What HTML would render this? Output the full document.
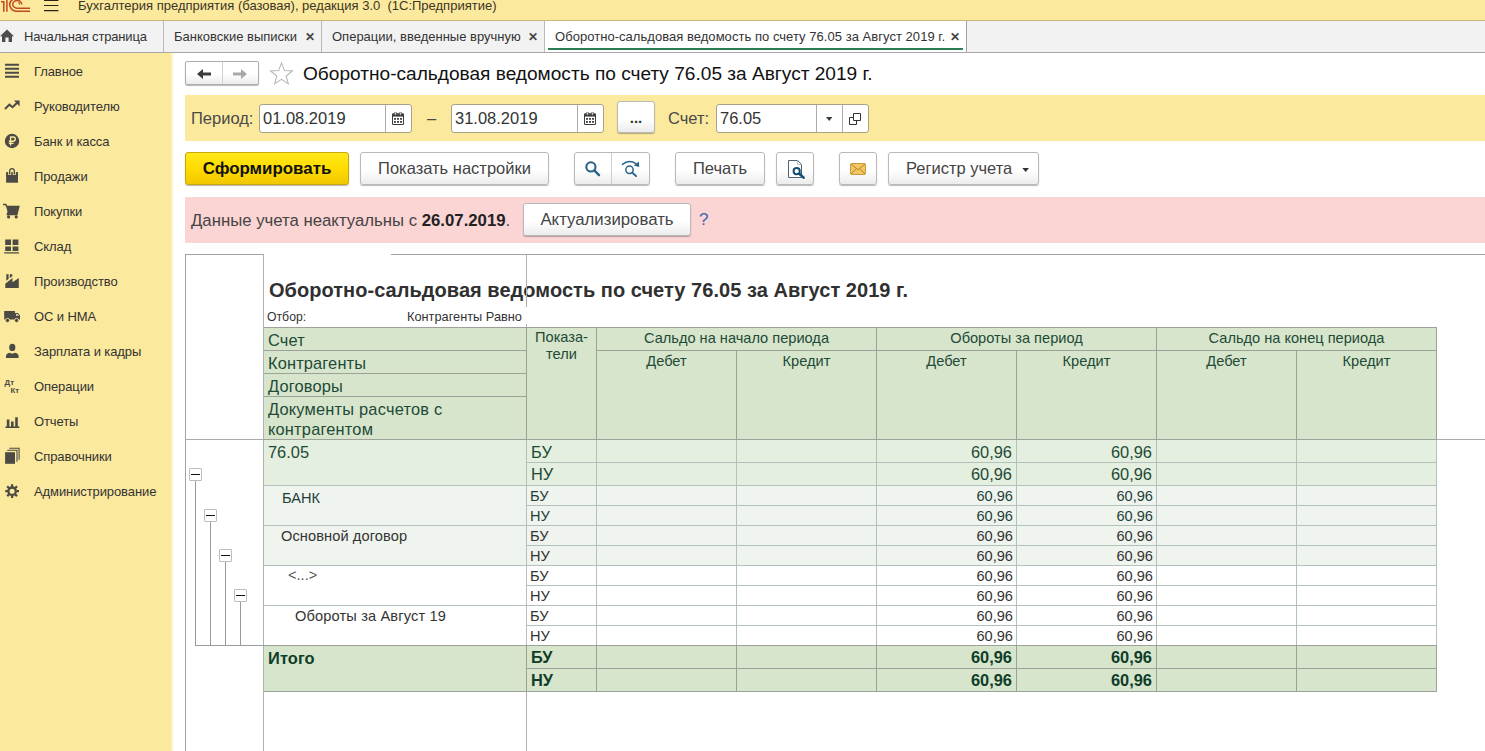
<!DOCTYPE html>
<html lang="ru"><head><meta charset="utf-8"><title>Оборотно-сальдовая ведомость по счету 76.05</title>
<style>
*{box-sizing:border-box;margin:0;padding:0}
html,body{width:1485px;height:751px;overflow:hidden;background:#fff}
body{font-family:"Liberation Sans",sans-serif;color:#333;position:relative;font-size:13px}
.a{position:absolute;white-space:nowrap}
#top{left:0;top:0;width:1485px;height:21px;background:#fbe99e;border-bottom:1px solid #c9b973}
#tabs{left:0;top:21px;width:1485px;height:32px;background:#f2f2f2;border-bottom:1px solid #a8a8a8}
#side{left:0;top:53px;width:173px;height:698px;background:#fbe99e;border-right:2px solid #fdf3c4}
.sep{position:absolute;top:21px;width:1px;height:31px;background:#b9b9b9}
.tab{position:absolute;top:21px;height:31px;line-height:31px;font-size:13px;color:#333;white-space:nowrap}
.x{position:absolute;top:22px;height:31px;line-height:31px;font-size:12px;font-weight:bold;color:#444}
.mi{position:absolute;left:34px;font-size:13px;color:#333;height:20px;line-height:20px;white-space:nowrap;letter-spacing:-.1px}
.ic{position:absolute;left:3px;width:18px;height:18px}
.btn{position:absolute;border:1px solid #b9b9b9;border-radius:3px;background:linear-gradient(#ffffff 0%,#ffffff 55%,#ececec 100%);box-shadow:0 1px 1px rgba(0,0,0,.28);text-align:center;color:#444;white-space:nowrap}
.inp{position:absolute;top:104px;height:29px;background:#fff;border:1px solid #a9a287;border-radius:3px;font-size:16.5px;line-height:27px;color:#333;padding-left:3px;white-space:nowrap}
.inp i{position:absolute;top:0;width:1px;height:27px;background:#adaca6}
.lbl{position:absolute;font-size:16.5px;color:#4a4a4a;top:104px;height:29px;line-height:29px;white-space:nowrap}
</style></head><body>

<div id="top" class="a">
<svg class="a" style="left:0;top:0" width="32" height="14" viewBox="0 0 32 14">
 <g fill="none" stroke="#c4481f" stroke-width="1.5">
  <path d="M1 1.8 H4.5 M3.8 1.2 V11.8 M6.9 0 V11.8"/>
  <path d="M13.2 -1 A7.4 6.65 0 0 0 17.2 11.25 H30"/>
  <path d="M21.7 4.5 A4.5 3.85 0 1 0 17.2 8.15 H30"/>
  <path d="M18.2 2.5 Q19.8 2.7 19.7 4.6" stroke-width="1.2"/>
 </g>
</svg>
<svg class="a" style="left:44px;top:0" width="15" height="12" viewBox="0 0 15 12"><path d="M0 0.3H14.4M0 5.5H14.4M0 10.6H14.4" stroke="#2a2412" stroke-width="1.2"/></svg>
<div class="a" style="left:78px;top:-4px;height:20px;line-height:20px;font-size:13px;color:#3a3524;white-space:pre">Бухгалтерия предприятия (базовая), редакция 3.0  (1С:Предприятие)</div>
</div>
<div id="tabs" class="a"></div>
<svg class="a" style="left:0;top:29px" width="15" height="14" viewBox="0 0 15 14"><path d="M0 7.2 L7 0.6 L14 7.2 H12 V12.9 H8.6 V8.6 H5.4 V12.9 H2 V7.2 Z" fill="#4d4d4d"/></svg>
<div class="tab" style="left:24px;letter-spacing:-.17px">Начальная страница</div>
<div class="sep" style="left:163px"></div>
<div class="tab" style="left:174px">Банковские выписки</div>
<div class="x" style="left:305px">✕</div>
<div class="sep" style="left:321px"></div>
<div class="tab" style="left:332px">Операции, введенные вручную</div>
<div class="x" style="left:528px">✕</div>
<div class="sep" style="left:544px"></div>
<div class="a" style="left:545px;top:21px;width:421px;height:31px;background:#fff"></div>
<div class="a" style="left:548px;top:48px;width:415px;height:2px;background:#2b7d54"></div>
<div class="tab" style="left:555px;color:#333;letter-spacing:.04px">Оборотно-сальдовая ведомость по счету 76.05 за Август 2019 г.</div>
<div class="x" style="left:950px">✕</div>
<div class="sep" style="left:966px;height:31px;background:#a2a2a2"></div>
<div id="side" class="a"></div>
<svg class="ic" style="top:62px" viewBox="0 0 18 18"><path d="M0 1.2H14M0 5.2H14M0 9.2H14M0 13.2H14" stroke="#4b4a44" stroke-width="2.1" transform="translate(2,1.6)"/></svg><div class="mi" style="top:62px">Главное</div>
<svg class="ic" style="top:97px" viewBox="0 0 18 18"><path d="M2 12 L6.4 7.6 L9.6 10.2 L14.6 5.2" stroke="#4b4a44" stroke-width="2" fill="none"/><path d="M11 3.6 H16.6 V9.2 Z" fill="#4b4a44"/></svg><div class="mi" style="top:97px">Руководителю</div>
<svg class="ic" style="top:132px" viewBox="0 0 18 18"><circle cx="9" cy="9" r="7.2" fill="#4b4a44"/><path d="M7.6 13.4 V5 H10.2 A2.1 2.1 0 0 1 10.2 9.2 H5.8 M5.8 11.4 H10.6" stroke="#fbe99e" stroke-width="1.4" fill="none"/></svg><div class="mi" style="top:132px">Банк и касса</div>
<svg class="ic" style="top:167px" viewBox="0 0 18 18"><path d="M3.1 5.1 H15 V15.7 H3.1 Z" fill="#4b4a44"/><path d="M6.7 8 V3.9 A2.3 2.3 0 0 1 11.3 3.9 V8" stroke="#fbe99e" stroke-width="3" fill="none"/><path d="M6.7 7.6 V3.9 A2.3 2.3 0 0 1 11.3 3.9 V7.6" stroke="#4b4a44" stroke-width="1.3" fill="none"/></svg><div class="mi" style="top:167px">Продажи</div>
<svg class="ic" style="top:202px" viewBox="0 0 18 18"><g transform="translate(-0.8,0.3)"><path d="M0.6 2.2 H3.6 L4.6 4.2 H16.6 L15 10.6 H5.6 L5.2 12.2 H15.4" stroke="#4b4a44" stroke-width="1.5" fill="none"/><path d="M4 4.2 H16.6 L15 10.6 H5.6 Z" fill="#4b4a44"/><circle cx="6.4" cy="14.6" r="1.6" fill="#4b4a44"/><circle cx="14" cy="14.6" r="1.6" fill="#4b4a44"/></g></svg><div class="mi" style="top:202px">Покупки</div>
<svg class="ic" style="top:237px" viewBox="0 0 18 18"><path d="M2.2 2.4 H8 V8 H2.2 Z M9.6 2.4 H15.4 V8 H9.6 Z M2.2 9.4 H8 V14 H2.2 Z M9.6 9.4 H15.4 V14 H9.6 Z M1.2 15.2 H16 V16.6 H1.2 Z" fill="#4b4a44"/></svg><div class="mi" style="top:237px">Склад</div>
<svg class="ic" style="top:272px" viewBox="0 0 18 18"><path d="M2.3 15.9 V11.7 L9.5 6.1 V10.3 L15.8 6.1 V15.9 Z M3.3 2.3 H5.6 V7 L3.3 8.8 Z M6.8 2.3 H9.3 V4.2 L6.8 6.1 Z" fill="#4b4a44"/></svg><div class="mi" style="top:272px">Производство</div>
<svg class="ic" style="top:307px" viewBox="0 0 18 18"><path d="M1.2 4.1 H11.9 V12.6 H1.2 Z M11.9 6 H15 L17 8.6 V12.6 H11.9 Z" fill="#4b4a44"/><path d="M13 7 H14.8 L16 8.8 H13 Z" fill="#e9dfae"/><circle cx="4.5" cy="13.4" r="2.1" fill="#4b4a44" stroke="#fbe99e" stroke-width=".8"/><circle cx="13.6" cy="13.4" r="2.1" fill="#4b4a44" stroke="#fbe99e" stroke-width=".8"/></svg><div class="mi" style="top:307px">ОС и НМА</div>
<svg class="ic" style="top:342px" viewBox="0 0 18 18"><ellipse cx="9.3" cy="5.4" rx="3.1" ry="3.6" fill="#4b4a44"/><path d="M3 16 V14.2 Q3 11.6 6.6 10.8 L9.3 11.8 L12 10.8 Q15.6 11.6 15.6 14.2 V16 Z" fill="#4b4a44"/></svg><div class="mi" style="top:342px">Зарплата и кадры</div>
<svg class="ic" style="top:377px" viewBox="0 0 18 18"><text x="1.6" y="7.6" font-family="Liberation Sans, sans-serif" font-size="7.8" font-weight="bold" fill="#4b4a44">Дт</text><text x="7.6" y="15.6" font-family="Liberation Sans, sans-serif" font-size="7.8" font-weight="bold" fill="#4b4a44">Кт</text></svg><div class="mi" style="top:377px">Операции</div>
<svg class="ic" style="top:412px" viewBox="0 0 18 18"><path d="M2.4 14.6 H16.4 V16 H2.4 Z M3.8 7.4 H6.4 V14.8 H3.8 Z M8 9.4 H10.6 V14.8 H8 Z M12.2 5.2 H14.8 V14.8 H12.2 Z" fill="#4b4a44"/></svg><div class="mi" style="top:412px">Отчеты</div>
<svg class="ic" style="top:447px" viewBox="0 0 18 18"><path d="M2.1 5.2 H12 V16.8 H2.1 Z" fill="#4b4a44"/><path d="M4.2 3.2 H14 V14.8 M6.4 1.3 H16.1 V12.8" stroke="#4b4a44" stroke-width="1.1" fill="none"/></svg><div class="mi" style="top:447px">Справочники</div>
<svg class="ic" style="top:482px" viewBox="0 0 18 18"><circle cx="9.1" cy="9.2" r="3.7" fill="none" stroke="#4b4a44" stroke-width="2.3"/><path d="M9.1 2.3V5M9.1 13.4V16.1M2.2 9.2H4.9M13.3 9.2H16M4.2 4.3L6.1 6.2M12.1 12.2L14 14.1M4.2 14.1L6.1 12.2M12.1 6.2L14 4.3" stroke="#4b4a44" stroke-width="2.3"/></svg><div class="mi" style="top:482px">Администрирование</div>

<!-- nav -->
<div class="btn" style="left:185px;top:61px;width:74px;height:24px;border-radius:2px;border-color:#adadad"></div>
<div class="a" style="left:222px;top:62px;width:1px;height:22px;background:#d2d2d2"></div>
<svg class="a" style="left:196px;top:67.6px" width="16" height="12" viewBox="0 0 16 12"><path d="M1 6 L7 1 V4.6 H15 V7.4 H7 V11 Z" fill="#3c3c3c"/></svg>
<svg class="a" style="left:232px;top:67.6px" width="16" height="12" viewBox="0 0 16 12"><path d="M15 6 L9 1 V4.6 H1 V7.4 H9 V11 Z" fill="#a9a9a9"/></svg>
<svg class="a" style="left:267.6px;top:60.6px" width="27" height="25" viewBox="0 0 26 24"><path d="M13 1.8 L15.8 9.2 L23.6 9.5 L17.5 14.4 L19.6 22 L13 17.7 L6.4 22 L8.5 14.4 L2.4 9.5 L10.2 9.2 Z" fill="#fff" stroke="#b5b5b5" stroke-width="1"/></svg>
<div class="a" style="left:303px;top:62px;height:24px;line-height:24px;font-size:19.1px;color:#111">Оборотно-сальдовая ведомость по счету 76.05 за Август 2019 г.</div>

<!-- period bar -->
<div class="a" style="left:185px;top:95px;width:1300px;height:46px;background:#fbe99e"></div>
<div class="lbl" style="left:191px">Период:</div>
<div class="inp" style="left:259px;width:153px">01.08.2019<i style="left:125px"></i></div>
<div class="lbl" style="left:427px">–</div>
<div class="inp" style="left:451px;width:153px">31.08.2019<i style="left:125px"></i></div>
<div class="btn" style="left:617px;top:101px;width:38px;height:32px;line-height:31px;font-size:15px;font-weight:bold;color:#333">...</div>
<div class="lbl" style="left:668px">Счет:</div>
<div class="inp" style="left:716px;width:153px">76.05<i style="left:99px"></i><i style="left:125px"></i></div>
<svg class="a" style="left:392px;top:112px" width="12" height="13" viewBox="0 0 12 13"><path d="M1.2 1.2 H10.8 A1.2 1.2 0 0 1 12 2.4 V11.8 A1.2 1.2 0 0 1 10.8 13 H1.2 A1.2 1.2 0 0 1 0 11.8 V2.4 A1.2 1.2 0 0 1 1.2 1.2 Z" fill="#3d3d3d"/><rect x="1" y="4.6" width="10" height="7.4" fill="#fff"/><rect x="2.7" y="0" width="1.7" height="3.2" rx=".85" fill="#fff" stroke="#3d3d3d" stroke-width=".7"/><rect x="7.6" y="0" width="1.7" height="3.2" rx=".85" fill="#fff" stroke="#3d3d3d" stroke-width=".7"/><path d="M2.1 6h1.8v1.8H2.1zM5.1 6h1.8v1.8H5.1zM8.1 6h1.8v1.8H8.1zM2.1 9h1.8v1.8H2.1zM5.1 9h1.8v1.8H5.1zM8.1 9h1.8v1.8H8.1z" fill="#2e2e2e"/></svg>
<svg class="a" style="left:584px;top:112px" width="12" height="13" viewBox="0 0 12 13"><path d="M1.2 1.2 H10.8 A1.2 1.2 0 0 1 12 2.4 V11.8 A1.2 1.2 0 0 1 10.8 13 H1.2 A1.2 1.2 0 0 1 0 11.8 V2.4 A1.2 1.2 0 0 1 1.2 1.2 Z" fill="#3d3d3d"/><rect x="1" y="4.6" width="10" height="7.4" fill="#fff"/><rect x="2.7" y="0" width="1.7" height="3.2" rx=".85" fill="#fff" stroke="#3d3d3d" stroke-width=".7"/><rect x="7.6" y="0" width="1.7" height="3.2" rx=".85" fill="#fff" stroke="#3d3d3d" stroke-width=".7"/><path d="M2.1 6h1.8v1.8H2.1zM5.1 6h1.8v1.8H5.1zM8.1 6h1.8v1.8H8.1zM2.1 9h1.8v1.8H2.1zM5.1 9h1.8v1.8H5.1zM8.1 9h1.8v1.8H8.1z" fill="#2e2e2e"/></svg>
<svg class="a" style="left:826px;top:117px" width="7" height="4" viewBox="0 0 7 4"><path d="M0 0 H6.4 L3.2 4 Z" fill="#3a3a3a"/></svg>
<svg class="a" style="left:848px;top:112px" width="14" height="14" viewBox="0 0 14 14"><path d="M5.5 1.5 H12.5 V8.5 H5.5 Z M5.5 5.5 H1.5 V12.5 H8.5 V8.5" fill="none" stroke="#333" stroke-width="1"/></svg>

<!-- buttons -->
<div class="btn" style="left:185px;top:152px;width:164px;height:33px;line-height:31px;font-size:16.9px;font-weight:bold;color:#111;background:linear-gradient(#ffe81a 0%,#ffdc00 50%,#f2c700 100%);border-color:#c9a70a">Сформировать</div>
<div class="btn" style="left:360px;top:152px;width:189px;height:33px;line-height:31px;font-size:16.5px">Показать настройки</div>
<div class="btn" style="left:574px;top:152px;width:76px;height:33px"></div>
<div class="a" style="left:611px;top:153px;width:1px;height:31px;background:#cfcfcf"></div>
<div class="btn" style="left:675px;top:152px;width:90px;height:33px;line-height:31px;font-size:16.5px">Печать</div>
<div class="btn" style="left:776px;top:152px;width:38px;height:33px"></div>
<div class="btn" style="left:839px;top:152px;width:38px;height:33px"></div>
<div class="btn" style="left:888px;top:152px;width:151px;height:33px;line-height:31px;font-size:16.5px;text-align:left;padding-left:17px">Регистр учета</div>
<svg class="a" style="left:1022px;top:168px" width="8" height="5" viewBox="0 0 8 5"><path d="M0.3 0 H7 L3.65 4 Z" fill="#333"/></svg>
<svg class="a" style="left:583px;top:159px" width="20" height="20" viewBox="0 0 20 20"><circle cx="7.9" cy="7.9" r="4.6" fill="none" stroke="#2a6389" stroke-width="2.1"/><path d="M11.3 11.4 L16 16.2" stroke="#2a6389" stroke-width="2.4" stroke-linecap="round"/></svg>
<svg class="a" style="left:620px;top:158px" width="22" height="22" viewBox="0 0 22 22"><circle cx="9.5" cy="11.8" r="3.7" fill="none" stroke="#2a6389" stroke-width="1.5"/><path d="M12.2 14.6 L16 18" stroke="#2a6389" stroke-width="1.9" stroke-linecap="round"/><path d="M2.4 6.4 Q9 1.2 16 5.6" fill="none" stroke="#2a6389" stroke-width="1.4" stroke-linecap="round"/><path d="M19 3.4 L19.2 9 L13.8 7.4 Z" fill="#2a6389"/></svg>
<svg class="a" style="left:787px;top:159px" width="20" height="21" viewBox="0 0 20 21"><path d="M1.5 1.5 H10.6 L14.5 5.4 V18.5 H1.5 Z" fill="#fff" stroke="#4d637a" stroke-width="1"/><path d="M10.6 1.5 V5.4 H14.5" fill="none" stroke="#9aa8b5" stroke-width=".8"/><circle cx="9.7" cy="12.2" r="3.1" fill="#fff" stroke="#134f6e" stroke-width="2"/><path d="M12.3 14.8 L16.6 18.6" stroke="#134f6e" stroke-width="2.6" stroke-linecap="round"/></svg>
<svg class="a" style="left:850px;top:163px" width="16" height="12" viewBox="0 0 16 12"><rect x=".5" y=".5" width="15" height="11" rx="1" fill="#f3c661" stroke="#c99a3a"/><path d="M1 1 L8 6.8 L15 1 M1 11 L6.2 5.6 M15 11 L9.8 5.6" fill="none" stroke="#b8842a" stroke-width="1"/></svg>

<!-- pink bar -->
<div class="a" style="left:185px;top:197px;width:1300px;height:46px;background:#fbd4d4"></div>
<div class="a" style="left:191px;top:210px;height:22px;line-height:22px;font-size:16.75px;color:#444">Данные учета неактуальны с <b style="color:#222">26.07.2019</b>.</div>
<div class="btn" style="left:523px;top:203px;width:168px;height:33px;line-height:31px;font-size:16.8px">Актуализировать</div>
<div class="a" style="left:699px;top:209px;height:22px;line-height:22px;font-size:17px;color:#3a66b0">?</div>
<!-- sheet -->
<div class="a" style="left:185px;top:254px;width:79px;height:1px;background:#a3a3a3;"></div>
<div class="a" style="left:391px;top:254px;width:1094px;height:1px;background:#a3a3a3;"></div>
<div class="a" style="left:185px;top:254px;width:1px;height:497px;background:#a3a3a3;"></div>
<div class="a" style="left:263px;top:254px;width:1px;height:497px;background:#b0b0b0;"></div>
<div class="a" style="left:185px;top:439px;width:1300px;height:1px;background:#ababab;"></div>
<div class="a" style="left:269px;top:277px;width:700px;height:26px;font-size:20px;font-weight:bold;line-height:26px;color:#303030;letter-spacing:.04px">Оборотно-сальдовая ведомость по счету 76.05 за Август 2019 г.</div>
<div class="a" style="left:267px;top:309px;width:100px;height:16px;font-size:13.6px;line-height:16px;color:#333;transform:scaleX(.9);transform-origin:0 0">Отбор:</div>
<div class="a" style="left:407px;top:309px;width:130px;height:16px;font-size:13.6px;line-height:16px;color:#333;transform:scaleX(.94);transform-origin:0 0">Контрагенты Равно</div>
<div class="a" style="left:264px;top:327px;width:1173px;height:113px;background:#d7e5cd;"></div>
<div class="a" style="left:264px;top:327px;width:1173px;height:1px;background:#9da298;"></div>
<div class="a" style="left:264px;top:350px;width:262px;height:1px;background:#9da298;"></div>
<div class="a" style="left:264px;top:373px;width:262px;height:1px;background:#9da298;"></div>
<div class="a" style="left:264px;top:396px;width:262px;height:1px;background:#9da298;"></div>
<div class="a" style="left:596px;top:350px;width:841px;height:1px;background:#9da298;"></div>
<div class="a" style="left:264px;top:439px;width:1173px;height:1px;background:#9da298;"></div>
<div class="a" style="left:526px;top:327px;width:1px;height:113px;background:#9da298;"></div>
<div class="a" style="left:596px;top:327px;width:1px;height:113px;background:#9da298;"></div>
<div class="a" style="left:736px;top:327px;width:1px;height:113px;background:#9da298;"></div>
<div class="a" style="left:876px;top:327px;width:1px;height:113px;background:#9da298;"></div>
<div class="a" style="left:1016px;top:327px;width:1px;height:113px;background:#9da298;"></div>
<div class="a" style="left:1156px;top:327px;width:1px;height:113px;background:#9da298;"></div>
<div class="a" style="left:1296px;top:327px;width:1px;height:113px;background:#9da298;"></div>
<div class="a" style="left:1436px;top:327px;width:1px;height:113px;background:#9da298;"></div>
<div class="a" style="left:736px;top:328px;width:1px;height:22px;background:#d7e5cd;"></div>
<div class="a" style="left:1016px;top:328px;width:1px;height:22px;background:#d7e5cd;"></div>
<div class="a" style="left:1296px;top:328px;width:1px;height:22px;background:#d7e5cd;"></div>
<div class="a" style="left:268px;top:329px;width:250px;height:22px;color:#1e4a36;font-size:16.4px;line-height:22px;letter-spacing:.15px">Счет</div>
<div class="a" style="left:268px;top:352px;width:250px;height:22px;color:#1e4a36;font-size:16.4px;line-height:22px;letter-spacing:.15px">Контрагенты</div>
<div class="a" style="left:268px;top:375px;width:250px;height:22px;color:#1e4a36;font-size:16.4px;line-height:22px;letter-spacing:.15px">Договоры</div>
<div class="a" style="left:268px;top:399px;width:256px;height:40px;color:#1e4a36;font-size:16.4px;line-height:20px;letter-spacing:.2px;white-space:normal">Документы расчетов с<br>контрагентом</div>
<div class="a" style="left:527px;top:329px;width:69px;height:40px;color:#1e4a36;font-size:14.6px;line-height:17px;text-align:center;white-space:normal">Показа-<br>тели</div>
<div class="a" style="left:597px;top:328px;width:279px;height:22px;color:#1e4a36;font-size:14.6px;line-height:21px;text-align:center">Сальдо на начало периода</div>
<div class="a" style="left:877px;top:328px;width:279px;height:22px;color:#1e4a36;font-size:14.6px;line-height:21px;text-align:center">Обороты за период</div>
<div class="a" style="left:1157px;top:328px;width:279px;height:22px;color:#1e4a36;font-size:14.6px;line-height:21px;text-align:center">Сальдо на конец периода</div>
<div class="a" style="left:597px;top:351px;width:139px;height:22px;color:#1e4a36;font-size:14.6px;line-height:21px;text-align:center">Дебет</div>
<div class="a" style="left:737px;top:351px;width:139px;height:22px;color:#1e4a36;font-size:14.6px;line-height:21px;text-align:center">Кредит</div>
<div class="a" style="left:877px;top:351px;width:139px;height:22px;color:#1e4a36;font-size:14.6px;line-height:21px;text-align:center">Дебет</div>
<div class="a" style="left:1017px;top:351px;width:139px;height:22px;color:#1e4a36;font-size:14.6px;line-height:21px;text-align:center">Кредит</div>
<div class="a" style="left:1157px;top:351px;width:139px;height:22px;color:#1e4a36;font-size:14.6px;line-height:21px;text-align:center">Дебет</div>
<div class="a" style="left:1297px;top:351px;width:139px;height:22px;color:#1e4a36;font-size:14.6px;line-height:21px;text-align:center">Кредит</div>
<div class="a" style="left:264px;top:440px;width:1173px;height:45px;background:#e4efdf;"></div>
<div class="a" style="left:264px;top:485px;width:1173px;height:80px;background:#eff4ee;"></div>
<div class="a" style="left:264px;top:645px;width:1173px;height:47px;background:#d7e5cd;"></div>
<div class="a" style="left:526px;top:462px;width:911px;height:1px;background:#b2c1b9;"></div>
<div class="a" style="left:264px;top:485px;width:1173px;height:1px;background:#b2c1b9;"></div>
<div class="a" style="left:526px;top:505px;width:911px;height:1px;background:#b2c1b9;"></div>
<div class="a" style="left:264px;top:525px;width:1173px;height:1px;background:#b2c1b9;"></div>
<div class="a" style="left:526px;top:545px;width:911px;height:1px;background:#b2c1b9;"></div>
<div class="a" style="left:264px;top:565px;width:1173px;height:1px;background:#b2c1b9;"></div>
<div class="a" style="left:526px;top:585px;width:911px;height:1px;background:#b2c1b9;"></div>
<div class="a" style="left:264px;top:605px;width:1173px;height:1px;background:#b2c1b9;"></div>
<div class="a" style="left:526px;top:625px;width:911px;height:1px;background:#b2c1b9;"></div>
<div class="a" style="left:264px;top:645px;width:1173px;height:1px;background:#9da298;"></div>
<div class="a" style="left:526px;top:668px;width:911px;height:1px;background:#9da298;"></div>
<div class="a" style="left:264px;top:691px;width:1173px;height:1px;background:#9da298;"></div>
<div class="a" style="left:264px;top:645px;width:1173px;height:1px;background:#9da298;"></div>
<div class="a" style="left:526px;top:440px;width:1px;height:205px;background:#b2c1b9;"></div>
<div class="a" style="left:526px;top:645px;width:1px;height:46px;background:#9da298;"></div>
<div class="a" style="left:596px;top:440px;width:1px;height:205px;background:#b2c1b9;"></div>
<div class="a" style="left:596px;top:645px;width:1px;height:46px;background:#9da298;"></div>
<div class="a" style="left:736px;top:440px;width:1px;height:205px;background:#b2c1b9;"></div>
<div class="a" style="left:736px;top:645px;width:1px;height:46px;background:#9da298;"></div>
<div class="a" style="left:876px;top:440px;width:1px;height:205px;background:#b2c1b9;"></div>
<div class="a" style="left:876px;top:645px;width:1px;height:46px;background:#9da298;"></div>
<div class="a" style="left:1016px;top:440px;width:1px;height:205px;background:#b2c1b9;"></div>
<div class="a" style="left:1016px;top:645px;width:1px;height:46px;background:#9da298;"></div>
<div class="a" style="left:1156px;top:440px;width:1px;height:205px;background:#b2c1b9;"></div>
<div class="a" style="left:1156px;top:645px;width:1px;height:46px;background:#9da298;"></div>
<div class="a" style="left:1296px;top:440px;width:1px;height:205px;background:#b2c1b9;"></div>
<div class="a" style="left:1296px;top:645px;width:1px;height:46px;background:#9da298;"></div>
<div class="a" style="left:1436px;top:440px;width:1px;height:205px;background:#b2c1b9;"></div>
<div class="a" style="left:1436px;top:645px;width:1px;height:46px;background:#9da298;"></div>
<div class="a" style="left:268px;top:441px;width:240px;height:22px;font-size:16.4px;line-height:22px;color:#1e4a36;letter-spacing:0px;">76.05</div>
<div class="a" style="left:282px;top:489px;width:240px;height:19px;font-size:14.6px;line-height:19px;color:#1f3f3a;letter-spacing:0px;">БАНК</div>
<div class="a" style="left:281px;top:527px;width:240px;height:19px;font-size:14.6px;line-height:19px;color:#333;letter-spacing:0.1px;">Основной договор</div>
<div class="a" style="left:288px;top:566px;width:240px;height:19px;font-size:14.6px;line-height:19px;color:#555;letter-spacing:0px;">&lt;...&gt;</div>
<div class="a" style="left:295px;top:607px;width:240px;height:19px;font-size:14.6px;line-height:19px;color:#333;letter-spacing:0.15px;">Обороты за Август 19</div>
<div class="a" style="left:268px;top:647px;width:240px;height:22px;font-size:16.4px;line-height:22px;color:#0f3d28;letter-spacing:0.1px;font-weight:bold;">Итого</div>
<div class="a" style="left:531px;top:441px;width:60px;height:22px;font-size:16.4px;line-height:22px;color:#1e4a36;">БУ</div>
<div class="a" style="left:876px;top:441px;width:136px;height:22px;font-size:16.4px;line-height:22px;color:#1e4a36;text-align:right">60,96</div>
<div class="a" style="left:1016px;top:441px;width:136px;height:22px;font-size:16.4px;line-height:22px;color:#1e4a36;text-align:right">60,96</div>
<div class="a" style="left:531px;top:463px;width:60px;height:23px;font-size:16.4px;line-height:23px;color:#1e4a36;">НУ</div>
<div class="a" style="left:876px;top:463px;width:136px;height:23px;font-size:16.4px;line-height:23px;color:#1e4a36;text-align:right">60,96</div>
<div class="a" style="left:1016px;top:463px;width:136px;height:23px;font-size:16.4px;line-height:23px;color:#1e4a36;text-align:right">60,96</div>
<div class="a" style="left:530px;top:486px;width:60px;height:20px;font-size:14.6px;line-height:20px;color:#1f3f3a;">БУ</div>
<div class="a" style="left:876px;top:486px;width:137px;height:20px;font-size:14.6px;line-height:20px;color:#1f3f3a;text-align:right">60,96</div>
<div class="a" style="left:1016px;top:486px;width:137px;height:20px;font-size:14.6px;line-height:20px;color:#1f3f3a;text-align:right">60,96</div>
<div class="a" style="left:530px;top:506px;width:60px;height:20px;font-size:14.6px;line-height:20px;color:#1f3f3a;">НУ</div>
<div class="a" style="left:876px;top:506px;width:137px;height:20px;font-size:14.6px;line-height:20px;color:#1f3f3a;text-align:right">60,96</div>
<div class="a" style="left:1016px;top:506px;width:137px;height:20px;font-size:14.6px;line-height:20px;color:#1f3f3a;text-align:right">60,96</div>
<div class="a" style="left:530px;top:526px;width:60px;height:20px;font-size:14.6px;line-height:20px;color:#333;">БУ</div>
<div class="a" style="left:876px;top:526px;width:137px;height:20px;font-size:14.6px;line-height:20px;color:#333;text-align:right">60,96</div>
<div class="a" style="left:1016px;top:526px;width:137px;height:20px;font-size:14.6px;line-height:20px;color:#333;text-align:right">60,96</div>
<div class="a" style="left:530px;top:546px;width:60px;height:20px;font-size:14.6px;line-height:20px;color:#333;">НУ</div>
<div class="a" style="left:876px;top:546px;width:137px;height:20px;font-size:14.6px;line-height:20px;color:#333;text-align:right">60,96</div>
<div class="a" style="left:1016px;top:546px;width:137px;height:20px;font-size:14.6px;line-height:20px;color:#333;text-align:right">60,96</div>
<div class="a" style="left:530px;top:566px;width:60px;height:20px;font-size:14.6px;line-height:20px;color:#333;">БУ</div>
<div class="a" style="left:876px;top:566px;width:137px;height:20px;font-size:14.6px;line-height:20px;color:#333;text-align:right">60,96</div>
<div class="a" style="left:1016px;top:566px;width:137px;height:20px;font-size:14.6px;line-height:20px;color:#333;text-align:right">60,96</div>
<div class="a" style="left:530px;top:586px;width:60px;height:20px;font-size:14.6px;line-height:20px;color:#333;">НУ</div>
<div class="a" style="left:876px;top:586px;width:137px;height:20px;font-size:14.6px;line-height:20px;color:#333;text-align:right">60,96</div>
<div class="a" style="left:1016px;top:586px;width:137px;height:20px;font-size:14.6px;line-height:20px;color:#333;text-align:right">60,96</div>
<div class="a" style="left:530px;top:606px;width:60px;height:20px;font-size:14.6px;line-height:20px;color:#333;">БУ</div>
<div class="a" style="left:876px;top:606px;width:137px;height:20px;font-size:14.6px;line-height:20px;color:#333;text-align:right">60,96</div>
<div class="a" style="left:1016px;top:606px;width:137px;height:20px;font-size:14.6px;line-height:20px;color:#333;text-align:right">60,96</div>
<div class="a" style="left:530px;top:626px;width:60px;height:20px;font-size:14.6px;line-height:20px;color:#333;">НУ</div>
<div class="a" style="left:876px;top:626px;width:137px;height:20px;font-size:14.6px;line-height:20px;color:#333;text-align:right">60,96</div>
<div class="a" style="left:1016px;top:626px;width:137px;height:20px;font-size:14.6px;line-height:20px;color:#333;text-align:right">60,96</div>
<div class="a" style="left:531px;top:646px;width:60px;height:23px;font-size:16.4px;line-height:23px;color:#0f3d28;font-weight:bold;">БУ</div>
<div class="a" style="left:876px;top:646px;width:136px;height:23px;font-size:16.4px;line-height:23px;color:#0f3d28;font-weight:bold;text-align:right">60,96</div>
<div class="a" style="left:1016px;top:646px;width:136px;height:23px;font-size:16.4px;line-height:23px;color:#0f3d28;font-weight:bold;text-align:right">60,96</div>
<div class="a" style="left:531px;top:669px;width:60px;height:23px;font-size:16.4px;line-height:23px;color:#0f3d28;font-weight:bold;">НУ</div>
<div class="a" style="left:876px;top:669px;width:136px;height:23px;font-size:16.4px;line-height:23px;color:#0f3d28;font-weight:bold;text-align:right">60,96</div>
<div class="a" style="left:1016px;top:669px;width:136px;height:23px;font-size:16.4px;line-height:23px;color:#0f3d28;font-weight:bold;text-align:right">60,96</div>
<div class="a" style="left:195px;top:480px;width:1px;height:165px;background:#9a9a9a;"></div>
<div class="a" style="left:189px;top:468px;width:13px;height:13px;border:1px solid #bdbdbd;border-radius:1px;background:#fff"></div>
<div class="a" style="left:191px;top:474px;width:9px;height:1px;background:#111;"></div>
<div class="a" style="left:210px;top:521px;width:1px;height:124px;background:#9a9a9a;"></div>
<div class="a" style="left:204px;top:509px;width:13px;height:13px;border:1px solid #bdbdbd;border-radius:1px;background:#fff"></div>
<div class="a" style="left:206px;top:515px;width:9px;height:1px;background:#111;"></div>
<div class="a" style="left:225px;top:561px;width:1px;height:84px;background:#9a9a9a;"></div>
<div class="a" style="left:219px;top:549px;width:13px;height:13px;border:1px solid #bdbdbd;border-radius:1px;background:#fff"></div>
<div class="a" style="left:221px;top:555px;width:9px;height:1px;background:#111;"></div>
<div class="a" style="left:240px;top:601px;width:1px;height:44px;background:#9a9a9a;"></div>
<div class="a" style="left:234px;top:589px;width:13px;height:13px;border:1px solid #bdbdbd;border-radius:1px;background:#fff"></div>
<div class="a" style="left:236px;top:595px;width:9px;height:1px;background:#111;"></div>
<div class="a" style="left:195px;top:645px;width:69px;height:1px;background:#9a9a9a;"></div>
<div class="a" style="left:526px;top:255px;width:1px;height:52px;background:#b0b0b0;"></div>
<div class="a" style="left:526px;top:324px;width:1px;height:3px;background:#b0b0b0;"></div>
<div class="a" style="left:526px;top:692px;width:1px;height:59px;background:#b0b0b0;"></div>
</body></html>
